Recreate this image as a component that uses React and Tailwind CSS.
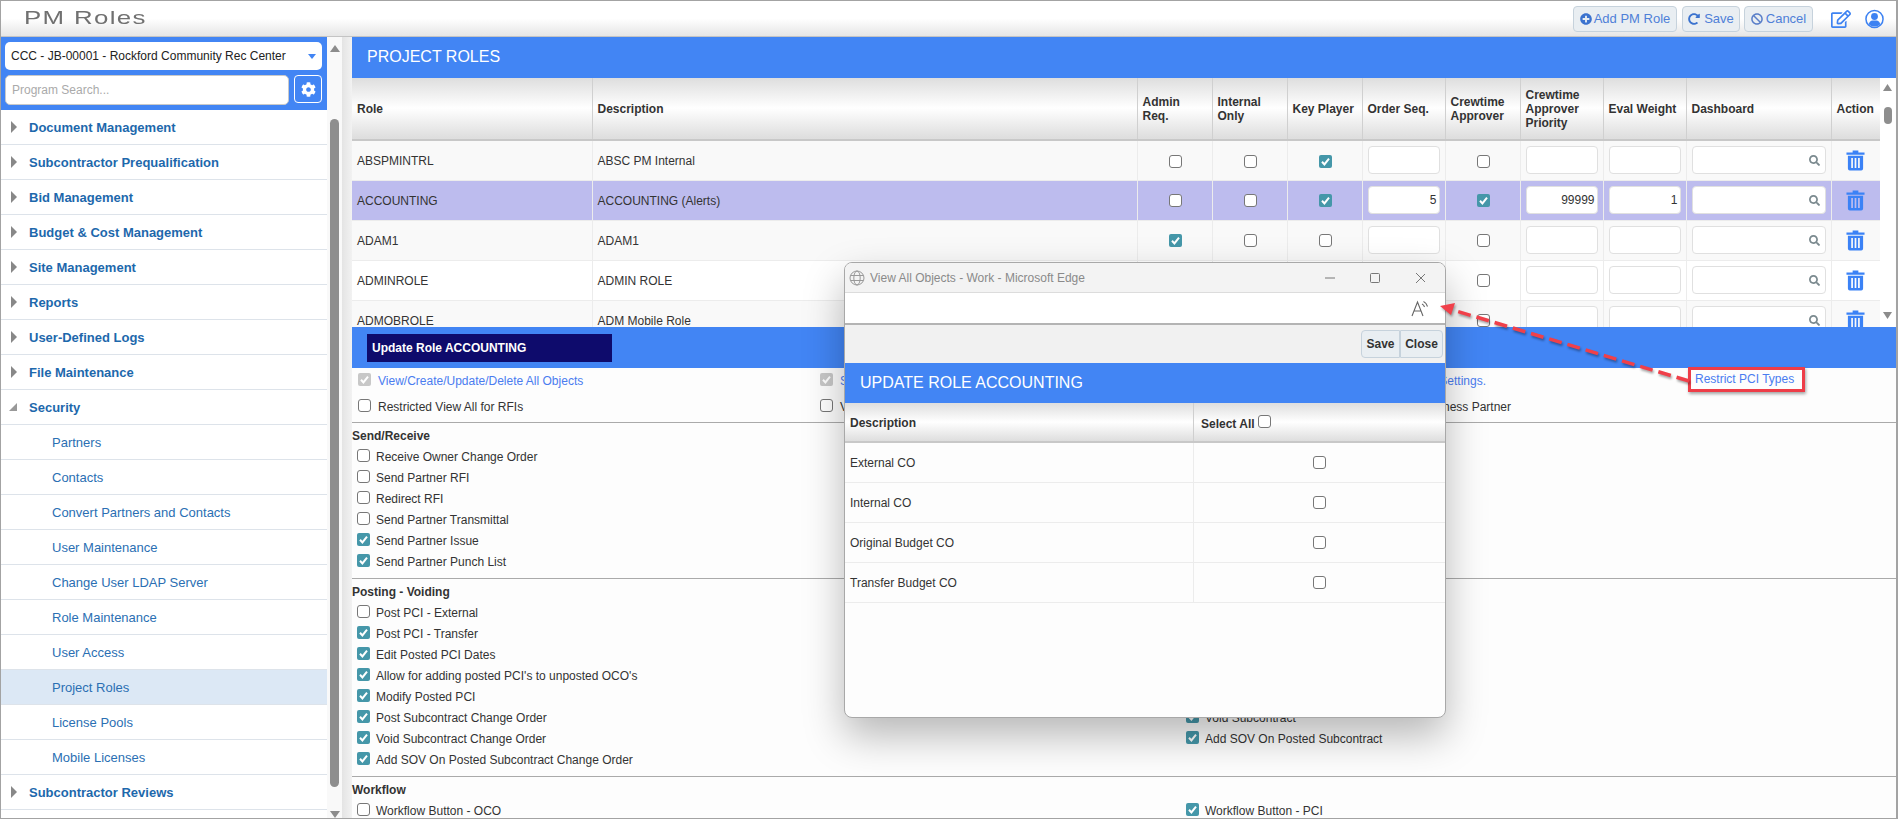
import React from 'react';
import { FaPlusCircle, FaRedoAlt, FaBan, FaRegEdit, FaCog, FaSearch } from 'react-icons/fa';

const topMenus = ['Document Management', 'Subcontractor Prequalification', 'Bid Management', 'Budget & Cost Management', 'Site Management', 'Reports', 'User-Defined Logs', 'File Maintenance'];
const securityItems = ['Partners', 'Contacts', 'Convert Partners and Contacts', 'User Maintenance', 'Change User LDAP Server', 'Role Maintenance', 'User Access', 'Project Roles', 'License Pools', 'Mobile Licenses'];

const roles = [
  { role: 'ABSPMINTRL', desc: 'ABSC PM Internal', key: true },
  { role: 'ACCOUNTING', desc: 'ACCOUNTING (Alerts)', key: true, order: '5', crew: true, priority: '99999', weight: '1', selected: true },
  { role: 'ADAM1', desc: 'ADAM1', admin: true },
  { role: 'ADMINROLE', desc: 'ADMIN ROLE' },
  { role: 'ADMOBROLE', desc: 'ADM Mobile Role' },
];

const sendReceive = [
  ['Receive Owner Change Order', false],
  ['Send Partner RFI', false],
  ['Redirect RFI', false],
  ['Send Partner Transmittal', false],
  ['Send Partner Issue', true],
  ['Send Partner Punch List', true],
];

const posting = [
  ['Post PCI - External', false],
  ['Post PCI - Transfer', true],
  ['Edit Posted PCI Dates', true],
  ["Allow for adding posted PCI's to unposted OCO's", true],
  ['Modify Posted PCI', true],
  ['Post Subcontract Change Order', true, 'Void Subcontract', true],
  ['Void Subcontract Change Order', true, 'Add SOV On Posted Subcontract', true],
  ['Add SOV On Posted Subcontract Change Order', true],
];

const workflow = [['Workflow Button - OCO', false, 'Workflow Button - PCI', true]];

function Checkbox({ checked, disabled, className = '' }) {
  if (checked) {
    return (
      <span className={`inline-flex w-[13px] h-[13px] shrink-0 items-center justify-center rounded-[2px] ${disabled ? 'bg-[#c8c8c8]' : 'bg-[#4597a9]'} ${className}`}>
        <svg viewBox="0 0 13 13" className="w-[13px] h-[13px]" fill="none" stroke="#fff" strokeWidth="2">
          <path d="M3 6.8 L5.4 9.4 L10 3.6" />
        </svg>
      </span>
    );
  }
  return <span className={`inline-block w-[13px] h-[13px] shrink-0 rounded-[3px] border border-[#777] bg-white ${className}`} />;
}

// plain triangles, the font awesome carets come out too small
function Caret({ dir, className }) {
  const points = { up: '0,7 5,0 10,7', down: '0,0 10,0 5,7', right: '0,0 7,6 0,12', corner: '10,0 10,7 0,7' }[dir];
  const box = dir === 'right' ? '0 0 7 12' : '0 0 10 7';
  return (
    <svg viewBox={box} className={className} preserveAspectRatio="none" fill="currentColor">
      <polygon points={points} />
    </svg>
  );
}

function TrashIcon() {
  return (
    <svg viewBox="0 0 20 23" className="w-[19px] h-[22px]" fill="#3b82f6">
      <path d="M7 1.5 H13 V3.5 H19.5 V6 H0.5 V3.5 H7 Z" />
      <path fillRule="evenodd" d="M2 7 H18 V20.5 Q18 22.5 16 22.5 H4 Q2 22.5 2 20.5 Z M5.5 9.5 V20 H7.3 V9.5 Z M9.1 9.5 V20 H10.9 V9.5 Z M12.7 9.5 V20 H14.5 V9.5 Z" />
    </svg>
  );
}

function UserIcon() {
  return (
    <svg viewBox="0 0 20 20" className="ml-[14px] w-[19px] h-[20px]" fill="#3d82f2">
      <circle cx="10" cy="10" r="9" fill="none" stroke="#3d82f2" strokeWidth="1.6" />
      <circle cx="10" cy="7.4" r="3.6" />
      <path d="M3.8 15.6 Q5 11.8 8 11.6 H12 Q15 11.8 16.2 15.6 Q13.6 18 10 18 Q6.4 18 3.8 15.6 Z" />
    </svg>
  );
}

function HeaderButton({ icon, label, className }) {
  return (
    <button className={`flex h-[26px] items-center justify-center gap-[2px] rounded-[4px] border border-[#c6d2dc] bg-[#e9eef2] text-[13px] text-[#4f80d8] ${className}`}>
      {icon}
      {label}
    </button>
  );
}

function MenuRow({ label, open }) {
  return (
    <div className="flex h-[35px] items-center border-b border-[#dde3ea] pl-[10px]">
      {open
        ? <Caret dir="corner" className="-ml-[2px] mr-0 w-[8px] h-[8px] text-[#999]" />
        : <Caret dir="right" className="w-[6px] h-[12px] text-[#888]" />}
      <span className="ml-[12px] pt-[2px] text-[13px] font-bold text-[#1d68ac]">{label}</span>
    </div>
  );
}

function SubRow({ label, active }) {
  return (
    <div className={`flex h-[35px] items-center border-b border-[#dde3ea] pl-[51px] pt-[2px] text-[13px] text-[#2b6fb3] ${active ? 'bg-[#dce8f5]' : ''}`}>
      {label}
    </div>
  );
}

function TextInput({ value, search }) {
  return (
    <div className="flex h-[28px] w-full items-center justify-end rounded-[4px] border border-[#e0e0e0] bg-white pr-[2px] text-[12px] text-[#333]">
      {value}
      {search && <FaSearch className="mr-[3px] w-[11px] h-[11px] text-[#7b8a8f]" />}
    </div>
  );
}

function CheckRow({ label, checked, narrow }) {
  return (
    <div className={`flex h-[21px] items-center gap-[6px] text-[12px] text-[#333] ${narrow ? 'pl-[5px]' : 'pl-0'}`}>
      <Checkbox checked={checked} className="mb-[3px]" />
      <span>{label}</span>
    </div>
  );
}

function PermSection({ title, rows, className = 'pb-[6px]' }) {
  return (
    <div className={`border-t border-[#aaa] ${className}`}>
      <div className="h-[23px] pt-[4px] text-[12px] leading-[19px] font-bold text-[#333]">{title}</div>
      {rows.map((r) => (
        <div key={r[0]} className="grid grid-cols-[834px_1fr]">
          <CheckRow label={r[0]} checked={r[1]} narrow />
          {r[2] ? <CheckRow label={r[2]} checked={r[3]} /> : <div />}
        </div>
      ))}
    </div>
  );
}

const thClass = 'border-r border-[#d0d0d0] px-[5px] text-left text-[12px] font-bold leading-[14px] text-[#333]';
const tdClass = 'border-r border-b border-[#ececec] px-[5px] text-[12px]';
const tdCheck = 'border-r border-b border-[#ececec] pl-[7px] pr-[5px] text-center text-[12px]';

export default function App() {
  return (
    <div className="relative flex h-[819px] w-[1898px] flex-col overflow-hidden border-t border-b border-l border-r-2 border-[#a3a3a3] bg-white font-['Liberation_Sans',Arial,sans-serif]">
      {/* top bar */}
      <div className="flex h-[36px] shrink-0 items-center border-b border-[#c4c4c4] bg-gradient-to-b from-white via-white to-[#e6e6e6] pl-[23px]">
        <span className="origin-left scale-x-[1.36] text-[19px] tracking-[1px] text-[#707070]">PM Roles</span>
        <div className="ml-auto flex items-center pr-[12px]">
          <HeaderButton className="w-[104px]" label="Add PM Role" icon={<FaPlusCircle className="w-[12px] h-[12px] text-[#3b73cf]" />} />
          <HeaderButton className="ml-[5px] w-[58px] gap-[4px]" label="Save" icon={<FaRedoAlt className="w-[12px] h-[12px] text-[#3b73cf]" />} />
          <HeaderButton className="ml-[4px] w-[69px] gap-[3px]" label="Cancel" icon={<FaBan className="w-[12px] h-[12px] text-[#5a7fc9]" />} />
          <FaRegEdit className="ml-[18px] w-[20px] h-[18px] text-[#3d82f2]" />
          <UserIcon />
        </div>
      </div>

      <div className="flex min-h-0 flex-1">
        {/* left nav */}
        <div className="flex w-[326px] shrink-0 flex-col">
          <div className="flex h-[73px] shrink-0 flex-col gap-[5px] bg-[#4285f4] px-[4px] pt-[5px]">
            <div className="flex h-[28px] w-[317px] items-center justify-between rounded-[5px] bg-white pl-[6px] pr-[6px] text-[12px] text-[#222]">
              CCC - JB-00001 - Rockford Community Rec Center
              <Caret dir="down" className="w-[8px] h-[5px] text-[#4285f4]" />
            </div>
            <div className="flex gap-[5px]">
              <div className="flex h-[30px] w-[284px] items-center rounded-[5px] border border-[#c9c9c9] bg-white pl-[6px] text-[12px] text-[#aaa]">Program Search...</div>
              <div className="flex h-[28px] w-[28px] items-center justify-center rounded-[4px] border border-white bg-[#4285f4]">
                <FaCog className="w-[15px] h-[15px] text-white" />
              </div>
            </div>
          </div>
          {topMenus.map((m) => <MenuRow key={m} label={m} />)}
          <MenuRow label="Security" open />
          {securityItems.map((s) => <SubRow key={s} label={s} active={s === 'Project Roles'} />)}
          <MenuRow label="Subcontractor Reviews" />
        </div>

        {/* nav scrollbar */}
        <div className="flex w-[15px] shrink-0 flex-col items-center bg-[#f9f9f9]">
          <Caret dir="up" className="mt-[8px] w-[10px] h-[7px] text-[#8c8c8c]" />
          <div className="mt-[67px] h-[669px] w-[9px] rounded-[5px] bg-[#8e8e8e]" />
          <Caret dir="down" className="mt-[24px] w-[10px] h-[7px] text-[#8c8c8c]" />
        </div>
        <div className="w-[10px] shrink-0 bg-gradient-to-r from-[#e4e4e4] to-[#f2f2f2]" />

        {/* main area */}
        <div className="flex min-w-0 flex-1 flex-col bg-[#fdfdfd]">
          <div className="flex h-[41px] shrink-0 items-center bg-[#4285f4] pb-[2px] pl-[15px] text-[16px] text-white">PROJECT ROLES</div>

          <div className="flex h-[249px] shrink-0 overflow-hidden">
            <div className="w-[1528px] shrink-0">
              <table className="w-full table-fixed border-collapse text-[#333]">
                <colgroup>
                  {[240, 545, 75, 75, 75, 83, 75, 83, 83, 145, 49].map((w, i) => <col key={i} style={{ width: w }} />)}
                </colgroup>
                <thead>
                  <tr className="h-[62px] border-b-2 border-[#c8c8c8] bg-gradient-to-b from-[#dedede] via-white to-[#dedede]">
                    <th className={thClass}>Role</th>
                    <th className={thClass}>Description</th>
                    <th className={thClass}>Admin<br />Req.</th>
                    <th className={thClass}>Internal<br />Only</th>
                    <th className={thClass}>Key Player</th>
                    <th className={thClass}>Order Seq.</th>
                    <th className={thClass}>Crewtime<br />Approver</th>
                    <th className={thClass}>Crewtime<br />Approver<br />Priority</th>
                    <th className={thClass}>Eval Weight</th>
                    <th className={thClass}>Dashboard</th>
                    <th className={thClass}>Action</th>
                  </tr>
                </thead>
                <tbody>
                  {roles.map((r, i) => (
                    <tr key={r.role} className={`h-[40px] ${r.selected ? 'bg-[#bdbcee]' : i % 2 === 0 ? 'bg-[#f9f9f9]' : 'bg-white'}`}>
                      <td className={`${tdClass} pt-[2px]`}>{r.role}</td>
                      <td className={`${tdClass} pt-[2px]`}>{r.desc}</td>
                      <td className={tdCheck}><Checkbox checked={r.admin} className="align-middle" /></td>
                      <td className={tdCheck}><Checkbox checked={r.internal} className="align-middle" /></td>
                      <td className={tdCheck}><Checkbox checked={r.key} className="align-middle" /></td>
                      <td className={tdClass}><TextInput value={r.order} /></td>
                      <td className={tdCheck}><Checkbox checked={r.crew} className="align-middle" /></td>
                      <td className={tdClass}><TextInput value={r.priority} /></td>
                      <td className={tdClass}><TextInput value={r.weight} /></td>
                      <td className={tdClass}><TextInput search /></td>
                      <td className={tdClass}><div className="flex justify-center"><TrashIcon /></div></td>
                    </tr>
                  ))}
                </tbody>
              </table>
            </div>
            <div className="flex w-[15px] shrink-0 flex-col items-center bg-white">
              <Caret dir="up" className="mt-[6px] w-[9px] h-[7px] text-[#8c8c8c]" />
              <div className="mt-[16px] h-[17px] w-[8px] rounded-[4px] bg-[#8e8e8e]" />
              <Caret dir="down" className="mt-[188px] w-[9px] h-[7px] text-[#8c8c8c]" />
            </div>
          </div>

          <div className="flex h-[41px] shrink-0 items-center bg-[#4285f4] pl-[15px]">
            <div className="flex h-[28px] w-[245px] items-center bg-[#0e0b6c] pl-[5px] text-[12px] font-bold text-white">Update Role ACCOUNTING</div>
          </div>

          {/* role options */}
          <div className="grid h-[54px] shrink-0 grid-cols-[462px_400px_291px_1fr] items-start pl-[6px] pt-[1px] text-[12px]">
            <div className="flex h-[23px] items-center gap-[7px] text-[#4a7cf0]"><Checkbox checked disabled className="mb-[3px]" />View/Create/Update/Delete All Objects</div>
            <div className="flex h-[23px] items-center gap-[7px] text-[#4a7cf0]"><Checkbox checked disabled className="mb-[3px]" />Settings</div>
            <div className="flex h-[23px] items-center justify-end pr-[25px] text-[#4a7cf0]">Settings.</div>
            <div className="relative flex h-[23px] items-center pb-[4px] pl-[184px] text-[#4a7cf0]">
              <span className="whitespace-nowrap">Restrict PCI Types</span>
              <div className="absolute left-[177px] top-[-2px] h-[25px] w-[117px] border-[3px] border-[#ee3d48] shadow-[1px_2px_3px_rgba(0,0,0,0.35)]" />
            </div>
            <div className="flex h-[23px] items-center gap-[7px] text-[#333]"><Checkbox className="mb-[3px]" />Restricted View All for RFIs</div>
            <div className="flex h-[23px] items-center gap-[7px] text-[#333]"><Checkbox className="mb-[3px]" />View</div>
            <div className="flex h-[23px] items-center justify-end text-[#333]">Business Partner</div>
            <div />
          </div>

          <PermSection title="Send/Receive" rows={sendReceive} />
          <PermSection title="Posting - Voiding" rows={posting} />
          <PermSection title="Workflow" rows={workflow} className="" />
        </div>
      </div>

      {/* popup window */}
      <div className="absolute left-[843px] top-[261px] flex h-[456px] w-[602px] flex-col overflow-hidden rounded-[8px] border border-[#a8a8a8] bg-[#fdfdfd] shadow-[0_18px_40px_rgba(0,0,0,0.28)]">
        <div className="flex h-[30px] shrink-0 items-center border-b border-[#dcdcdc] bg-[#f3f3f3] pl-[4px] text-[12px] text-[#8a8a8a]">
          <svg viewBox="0 0 16 16" className="w-[16px] h-[16px]" fill="none" stroke="#999" strokeWidth="1">
            <circle cx="8" cy="8" r="7" />
            <ellipse cx="8" cy="8" rx="3.2" ry="7" />
            <path d="M1.5 5.5 H14.5 M1.5 10.5 H14.5" />
          </svg>
          <span className="ml-[5px]">View All Objects - Work - Microsoft Edge</span>
          <svg viewBox="0 0 100 12" className="ml-auto mr-[20px] h-[12px] w-[100px]" fill="none" stroke="#777" strokeWidth="1">
            <path d="M0 6 H10" />
            <rect x="45.5" y="1.5" width="9" height="9" rx="1" />
            <path d="M91 1 L101 11 M101 1 L91 11" />
          </svg>
        </div>
        <div className="flex h-[32px] shrink-0 items-center justify-end border-b-2 border-[#b4b4b4] bg-white pr-[15px]">
          <svg viewBox="0 0 20 18" className="h-[18px] w-[20px]" fill="none" stroke="#666" strokeWidth="1.1">
            <path d="M2 17 L7.5 3 L13 17 M4 12 H11" />
            <path d="M12 5 Q14 6 14.5 8 M13.5 2.5 Q16.5 4 17.5 7.5" />
          </svg>
        </div>
        <div className="flex h-[38px] shrink-0 items-center justify-end bg-[#f1f1f1] pr-[2px]">
          <button className="h-[28px] w-[39px] rounded-l-[4px] border border-[#c6d2dc] bg-[#e9eef2] text-[12px] font-bold text-[#333]">Save</button>
          <button className="h-[28px] w-[43px] rounded-r-[4px] border border-[#c6d2dc] bg-[#e9eef2] text-[12px] font-bold text-[#333]">Close</button>
        </div>
        <div className="flex h-[40px] shrink-0 items-center bg-[#4285f4] pl-[15px] text-[16px] text-white">UPDATE ROLE ACCOUNTING</div>
        <div className="grid h-[40px] shrink-0 grid-cols-[349px_1fr] border-b-2 border-[#c8c8c8] bg-gradient-to-b from-[#dedede] via-white to-[#dedede] text-[12px] font-bold text-[#333]">
          <div className="flex items-center border-r border-[#cfcfcf] pl-[5px] pt-[1px]">Description</div>
          <div className="flex items-center gap-[3px] pl-[7px] pt-[3px]">Select All<Checkbox className="mb-[5px]" /></div>
        </div>
        {['External CO', 'Internal CO', 'Original Budget CO', 'Transfer Budget CO'].map((d) => (
          <div key={d} className="grid h-[40px] shrink-0 grid-cols-[349px_1fr] border-b border-[#ececec] text-[12px] text-[#333]">
            <div className="flex items-center border-r border-[#ececec] pl-[5px]">{d}</div>
            <div className="flex items-center justify-center"><Checkbox /></div>
          </div>
        ))}
      </div>

      {/* annotation arrow */}
      <svg className="pointer-events-none absolute left-0 top-0 h-[819px] w-[1898px]" viewBox="0 0 1898 819" fill="none">
        <g className="drop-shadow-[1px_2px_1px_rgba(0,0,0,0.35)]">
          <path d="M1688 380 L1452 309" stroke="#f0404a" strokeWidth="3.5" strokeDasharray="13 6" />
          <path d="M1439 305 L1454 302 L1450 314 Z" fill="#f0404a" />
        </g>
      </svg>
    </div>
  );
}
